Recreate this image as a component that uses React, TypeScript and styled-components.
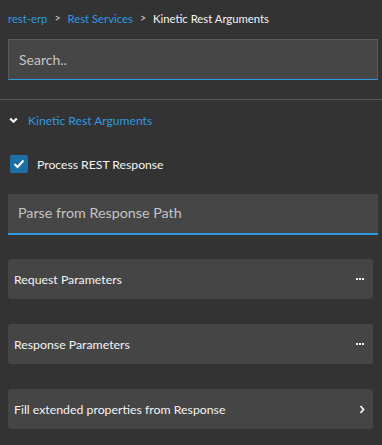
import React from "react";
import styled, { createGlobalStyle } from "styled-components";

const Global = createGlobalStyle`
  html, body { margin: 0; padding: 0; background: #333333; }
  body { font-family: "Lato", "Open Sans", sans-serif; }
  * { box-sizing: border-box; }
`;

const Page = styled.div`
  width: 382px;
  height: 445px;
  background: #333333;
  display: flex;
  flex-direction: column;
  overflow: hidden;
`;

const Top = styled.div`
  padding: 8px 4px 0 8px;
  display: flex;
  flex-direction: column;
`;

const Crumbs = styled.div`
  display: flex;
  align-items: center;
  height: 20px;
  font-size: 11.3px;
  gap: 7px;
`;

const Crumb = styled.span<{ $current?: boolean }>`
  color: ${(p) => (p.$current ? "#f4f4f4" : "#2f9ae0")};
`;

const Sep = styled.span`
  color: #cfcfcf;
  font-size: 10.5px;
`;

const SearchBox = styled.div`
  margin-top: 11px;
  height: 41px;
  background: #464646;
  border: 1px solid #5c5c5c;
  border-bottom: 1px solid #2f9ae0;
  display: flex;
  align-items: center;
  padding-left: 10px;
  color: #c4c4c4;
  font-size: 14px;
`;

const Divider = styled.div`
  margin-top: 19px;
  height: 1px;
  background: #575757;
`;

const Body = styled.div`
  padding: 0 9px 0 8px;
  display: flex;
  flex-direction: column;
`;

const SectionHead = styled.div`
  display: flex;
  align-items: center;
  height: 20px;
  margin-top: 10px;
  gap: 10px;
  padding-left: 1px;
  color: #2f9ae0;
  font-size: 12.1px;
`;

const CheckRow = styled.div`
  display: flex;
  align-items: center;
  margin-top: 25px;
  gap: 9px;
  padding-left: 2px;
  color: #f4f4f4;
  font-size: 12.2px;
`;

const Box = styled.div`
  width: 18px;
  height: 18px;
  border-radius: 2px;
  background: #1c6fa6;
  display: flex;
  align-items: center;
  justify-content: center;
`;

const TextField = styled.div`
  margin-top: 21px;
  margin-right: -5px;
  height: 41px;
  background: #464646;
  border-bottom: 2px solid #2f9ae0;
  display: flex;
  align-items: center;
  padding-left: 10px;
  padding-bottom: 2px;
  color: #c4c4c4;
  font-size: 14.3px;
`;

const Cards = styled.div`
  margin-top: 24px;
  display: flex;
  flex-direction: column;
  gap: 25px;
`;

const Card = styled.div`
  height: 40px;
  background: #454545;
  border-radius: 3px;
  display: flex;
  align-items: center;
  justify-content: space-between;
  padding: 0 8px 0 6px;
  color: #f4f4f4;
  font-size: 12.3px;
`;

const Chevron = () => (
  <svg width="9" height="7" viewBox="0 0 9 7">
    <path d="M1.2 1.5 L4.5 4.8 L7.8 1.5" stroke="#f4f4f4" strokeWidth="2.2" fill="none" />
  </svg>
);

const Check = () => (
  <svg width="12" height="10" viewBox="0 0 12 10">
    <path d="M1.5 5 L4.5 8 L10.5 1.5" stroke="#ffffff" strokeWidth="2" fill="none" />
  </svg>
);

const Dots = () => (
  <svg width="9" height="3" viewBox="0 0 9 3">
    <rect x="0" y="0" width="2" height="2" fill="#f4f4f4" />
    <rect x="3" y="0" width="2" height="2" fill="#f4f4f4" />
    <rect x="6" y="0" width="2" height="2" fill="#f4f4f4" />
  </svg>
);

const Right = () => (
  <svg width="6" height="9" viewBox="0 0 6 9">
    <path d="M1.5 1 L4.5 4.5 L1.5 8" stroke="#f4f4f4" strokeWidth="1.8" fill="none" />
  </svg>
);

export default function App() {
  return (
    <Page>
      <Global />
      <Top>
        <Crumbs>
          <Crumb>rest-erp</Crumb>
          <Sep>&gt;</Sep>
          <Crumb>Rest Services</Crumb>
          <Sep>&gt;</Sep>
          <Crumb $current>Kinetic Rest Arguments</Crumb>
        </Crumbs>
        <SearchBox>Search..</SearchBox>
      </Top>
      <Divider />
      <Body>
        <SectionHead>
          <Chevron />
          <span>Kinetic Rest Arguments</span>
        </SectionHead>
        <CheckRow>
          <Box>
            <Check />
          </Box>
          <span>Process REST Response</span>
        </CheckRow>
        <TextField>Parse from Response Path</TextField>
        <Cards>
          <Card>
            <span>Request Parameters</span>
            <Dots />
          </Card>
          <Card>
            <span>Response Parameters</span>
            <Dots />
          </Card>
          <Card>
            <span>Fill extended properties from Response</span>
            <Right />
          </Card>
        </Cards>
      </Body>
    </Page>
  );
}
